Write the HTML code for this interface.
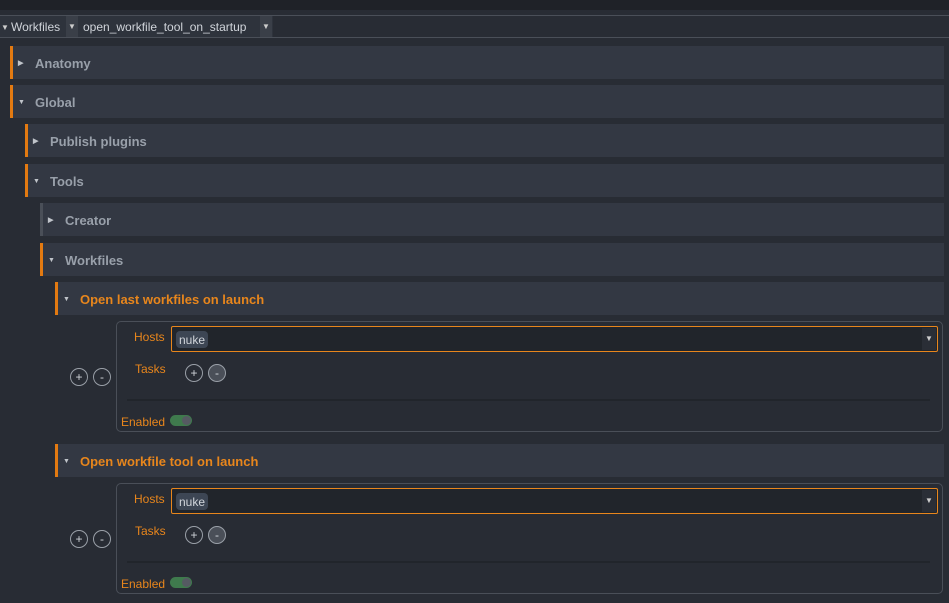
<!DOCTYPE html><html><head><style>
body{margin:0;width:949px;height:603px;background:#282c34;font-family:"Liberation Sans",sans-serif;position:relative;overflow:hidden}
.a{position:absolute}
.sec{position:absolute;right:5px;height:33px;background:#333843;border-left:3px solid #e37a11;box-sizing:border-box;font-size:13px;font-weight:bold;color:#99a0aa;line-height:35px}
.sec span{position:absolute;left:22px}
.tri{position:absolute;left:5px;top:0;font-size:7px;color:#c0c4ca;font-style:normal}
.box{position:absolute;left:116px;right:6px;height:111px;border:1px solid #4a4f58;border-radius:5px;box-sizing:border-box}
.lbl{position:absolute;color:#e8861c;font-size:12px}
.host{position:absolute;left:54px;top:4px;right:4px;height:26px;background:#21252b;border:1px solid #e8861c;border-radius:2px;box-sizing:border-box}
.chip{position:absolute;left:4px;top:4px;height:17px;padding:0 3px;background:#3d4654;border-radius:4px;color:#d0d4da;font-size:12px;line-height:18px}
.dd{position:absolute;right:1px;top:1px;width:14px;height:22px;background:#2a2e36;color:#ccc;font-size:8px;text-align:center;line-height:22px}
.c{position:absolute;width:18px;height:18px;border:1px solid #9aa0a8;border-radius:50%;box-sizing:border-box;color:#d0d4da;font-size:12px;text-align:center;line-height:16px}
.sw{position:absolute;width:22px;height:11px;background:#3f7a4d;border-radius:6px}
.sw:after{content:"";position:absolute;right:1px;top:1px;width:9px;height:9px;border-radius:50%;background:#555a62}
.line{position:absolute;left:10px;right:12px;height:2px;background:#21252b}
</style></head><body>
<div class="a" style="left:0;top:0;width:949px;height:10px;background:#1f2228"></div>
<div class="a" style="left:0;top:15px;width:949px;height:1px;background:#4a4f58"></div>
<div class="a" style="left:0;top:37px;width:949px;height:1px;background:#4a4f58"></div>
<div class="a" style="left:0;top:16px;width:273px;height:21px;background:#2e333c"></div>
<div class="a" style="left:1px;top:17px;font-size:8px;color:#ccc;line-height:21px">▼</div>
<div class="a" style="left:11px;top:17px;font-size:12px;color:#d0d4da;line-height:21px">Workfiles</div>
<div class="a" style="left:66px;top:16px;width:12px;height:21px;background:#3a3f48;font-size:8px;color:#ccc;line-height:21px;text-align:center">▼</div>
<div class="a" style="left:83px;top:17px;font-size:12px;color:#d0d4da;line-height:21px">open_workfile_tool_on_startup</div>
<div class="a" style="left:260px;top:16px;width:12px;height:21px;background:#3a3f48;font-size:8px;color:#ccc;line-height:21px;text-align:center">▼</div>

<div class="sec" style="left:10px;top:46px"><i class="tri">▶</i><span>Anatomy</span></div>
<div class="sec" style="left:10px;top:85px"><i class="tri">▼</i><span>Global</span></div>
<div class="sec" style="left:25px;top:124px"><i class="tri">▶</i><span>Publish plugins</span></div>
<div class="sec" style="left:25px;top:164px"><i class="tri">▼</i><span>Tools</span></div>
<div class="sec" style="left:40px;top:203px;border-left-color:#4a4f58"><i class="tri">▶</i><span>Creator</span></div>
<div class="sec" style="left:40px;top:243px"><i class="tri">▼</i><span>Workfiles</span></div>
<div class="sec" style="left:55px;top:282px;color:#e8861c"><i class="tri">▼</i><span>Open last workfiles on launch</span></div>
<div class="c" style="left:70px;top:368px">+</div><div class="c" style="left:93px;top:368px">-</div>
<div class="box" style="top:321px">
<div class="lbl" style="left:17px;top:8px">Hosts</div>
<div class="host"><div class="chip">nuke</div><div class="dd">▼</div></div>
<div class="lbl" style="left:18px;top:40px">Tasks</div>
<div class="c" style="left:68px;top:42px">+</div><div class="c" style="left:91px;top:42px;background:#4a4f58">-</div>
<div class="line" style="top:77px"></div>
<div class="lbl" style="left:4px;top:93px">Enabled</div>
<div class="sw" style="left:53px;top:93px"></div>
</div>
<div class="sec" style="left:55px;top:444px;color:#e8861c"><i class="tri">▼</i><span>Open workfile tool on launch</span></div>
<div class="c" style="left:70px;top:530px">+</div><div class="c" style="left:93px;top:530px">-</div>
<div class="box" style="top:483px">
<div class="lbl" style="left:17px;top:8px">Hosts</div>
<div class="host"><div class="chip">nuke</div><div class="dd">▼</div></div>
<div class="lbl" style="left:18px;top:40px">Tasks</div>
<div class="c" style="left:68px;top:42px">+</div><div class="c" style="left:91px;top:42px;background:#4a4f58">-</div>
<div class="line" style="top:77px"></div>
<div class="lbl" style="left:4px;top:93px">Enabled</div>
<div class="sw" style="left:53px;top:93px"></div>
</div>
</body></html>
